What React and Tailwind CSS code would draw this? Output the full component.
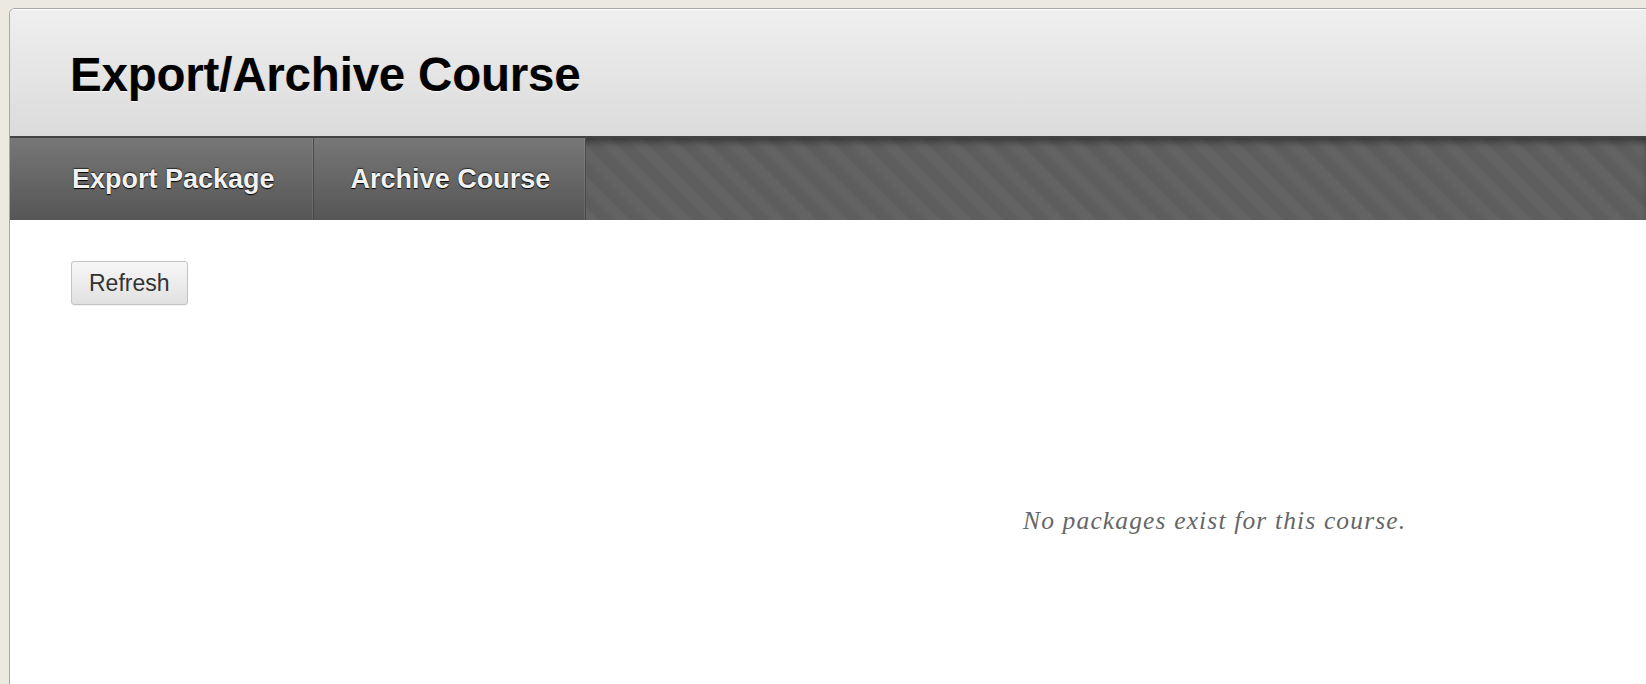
export default function App() {
  const tabs = [
    { label: 'Export Package', pad: 'pl-[62px] pr-[38px]' },
    { label: 'Archive Course', pad: 'pl-[37px] pr-[35px]' },
  ]

  return (
    <div className="h-[684px] overflow-hidden bg-[#ece9e1] pl-[9px] pt-[8px] font-['Liberation_Sans',Arial,sans-serif]">
      <div className="h-[700px] overflow-hidden rounded-tl-[6px] border-l border-t border-[#a8a8a8] bg-white">
        {/* Page title */}
        <div className="flex h-[127px] items-center border-t border-white bg-gradient-to-b from-[#efefef] to-[#dbdbdb] pl-[60px] pt-[3px]">
          <h1 className="text-[47.5px] font-bold leading-none tracking-[-0.2px] text-black [text-shadow:0_1px_1px_rgba(255,255,255,0.9),0_0_1px_rgba(120,120,120,0.6)]">
            Export/Archive Course
          </h1>
        </div>

        {/* Tabs */}
        <div className="flex h-[84px] border-t-2 border-[#444] bg-[repeating-linear-gradient(45deg,#5d5d5d_0px,#5e5e5e_8px,#636363_12px,#636363_19px,#5d5d5d_22px)] shadow-[inset_0_7px_7px_-3px_rgba(0,0,0,0.4)]">
          {tabs.map(({ label, pad }) => (
            <div
              key={label}
              className={`flex items-center border-r border-[#4b4b4b] bg-gradient-to-b from-[#777] to-[#565656] shadow-[inset_-1px_0_0_rgba(255,255,255,0.08)] ${pad}`}
            >
              <span className="text-[27px] font-bold text-[#f2f2f2] [text-shadow:0_1px_1px_#000,0_-1px_1px_rgba(0,0,0,0.6)]">
                {label}
              </span>
            </div>
          ))}
        </div>

        {/* Content */}
        <div className="flex flex-col items-start pl-[61px] pt-[41px]">
          <button
            type="button"
            className="h-[44px] rounded-[3px] border border-[#c3c3c3] bg-gradient-to-b from-[#f7f7f7] to-[#e1e1e1] px-[17px] text-[23px] text-[#333] shadow-[0_1px_1px_rgba(0,0,0,0.05)]"
          >
            Refresh
          </button>
          <p className="ml-[952px] mt-[201px] font-['Liberation_Serif','Times_New_Roman',serif] text-[25.5px] italic leading-[30px] tracking-[1.15px] text-[#666]">
            No packages exist for this course.
          </p>
        </div>
      </div>
    </div>
  )
}
